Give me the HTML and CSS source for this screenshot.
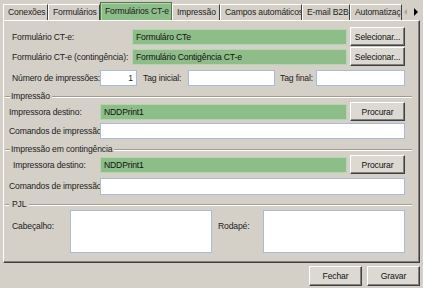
FILE: index.html
```html
<!DOCTYPE html>
<html>
<head>
<meta charset="utf-8">
<link rel="stylesheet" href="styles.css">
</head>
<body>
<div class="window">
  <div class="tabs">
    <div class="tab t1">Conexões</div>
    <div class="tab t2">Formulários</div>
    <div class="tab active t3">Formulários CT-e</div>
    <div class="tab t4">Impressão</div>
    <div class="tab t5">Campos automáticos</div>
    <div class="tab t6">E-mail B2B</div>
    <div class="tab t7">Automatizaç</div>
    <div class="arrows">
      <svg width="18" height="10" viewBox="0 0 18 10"><path d="M5 2 L2 5 L5 8 Z" fill="#a8a49c"/><path d="M12 1 L16 5 L12 9 Z" fill="#000"/></svg>
    </div>
  </div>
  <div class="panel">
    <div class="row r1">
      <span class="lbl w120">Formulário CT-e:</span>
      <div class="green w215">Formuláro CTe</div>
      <button class="btn sel">Selecionar...</button>
    </div>
    <div class="row r2">
      <span class="lbl w120">Formulário CT-e (contingência):</span>
      <div class="green w215">Formulário Contigência CT-e</div>
      <button class="btn sel">Selecionar...</button>
    </div>
    <div class="row r3">
      <span class="lbl w88">Número de impressões:</span>
      <div class="input num">1</div>
      <span class="lbl tagi">Tag inicial:</span>
      <div class="input w87"></div>
      <span class="lbl tagf">Tag final:</span>
      <div class="input w89"></div>
    </div>

    <div class="legend g1"><span>Impressão</span></div>
    <div class="row r4">
      <span class="lbl w91">Impressora destino:</span>
      <div class="green w247">NDDPrint1</div>
      <button class="btn proc">Procurar</button>
    </div>
    <div class="row r5">
      <span class="lbl w91">Comandos de impressão:</span>
      <div class="input w305"></div>
    </div>

    <div class="legend g2"><span>Impressão em contingência</span></div>
    <div class="row r6">
      <span class="lbl w91 ind">Impressora destino:</span>
      <div class="green w247">NDDPrint1</div>
      <button class="btn proc">Procurar</button>
    </div>
    <div class="row r7">
      <span class="lbl w91">Comandos de impressão:</span>
      <div class="input w305"></div>
    </div>

    <div class="legend g3"><span>PJL</span></div>
    <div class="row r8">
      <span class="lbl cab">Cabeçalho:</span>
      <div class="input area"></div>
      <span class="lbl rod">Rodapé:</span>
      <div class="input area"></div>
    </div>
  </div>
  <div class="footer">
    <button class="btn foot">Fechar</button>
    <button class="btn foot">Gravar</button>
  </div>
</div>
</body>
</html>
```

FILE: styles.css
```css
* { box-sizing: border-box; }
html, body {
  margin: 0;
  padding: 0;
  background: #d4d0c8;
  width: 423px;
  height: 288px;
  overflow: hidden;
  font-family: "Liberation Sans", Arial, sans-serif;
  font-size: 8.6px;
  letter-spacing: -0.15px;
  color: #222;
}
.window {
  padding: 2px 3px 0 3px;
}
.tabs {
  display: flex;
  align-items: flex-end;
  height: 18px;
  position: relative;
  z-index: 1;
}
.tab {
  height: 16px;
  line-height: 15px;
  padding: 0 3px 0 4px;
  border: 1px solid;
  border-color: #fff #404040 transparent #fff;
  border-bottom: none;
  white-space: nowrap;
  overflow: hidden;
}
.t1 { width: 45px; }
.t2 { width: 52px; }
.t3 { width: 72px; }
.t4 { width: 48px; }
.t5 { width: 82px; }
.t6 { width: 48px; }
.t7 { width: 52px; }
.tab.active {
  height: 18px;
  background: #8dbd88;
  border: 1px solid #4f7a4b;
  border-bottom: none;
  line-height: 16px;
  box-shadow: inset 1px 1px #b6d8b1;
}
.arrows {
  height: 16px;
  display: flex;
  align-items: center;
}
.panel {
  height: 243px;
  width: 417px;
  border: 1px solid;
  border-color: #fff #404040 #404040 #fff;
  box-shadow: inset -1px -1px #808080;
  padding: 6px 0 0 5px;
}
.row {
  display: flex;
  align-items: center;
}
.r1, .r2, .r3 { padding-left: 3px; }
.r1 { height: 19px; }
.r2 { height: 19px; margin-top: 1px; }
.r3 { height: 18px; margin-top: 3px; }
.r4 { height: 19px; }
.r5 { height: 17px; margin-top: 1px; }
.r6 { height: 19px; }
.r7 { height: 18px; margin-top: 3px; }
.r8 { align-items: flex-start; height: 43px; }

.lbl { white-space: nowrap; flex: none; }
.w120 { width: 120px; }
.w88 { width: 88px; }
.w91 { width: 91px; }
.ind { padding-left: 4px; }
.tagi { width: 45px; margin-left: 6px; }
.tagf { width: 36px; margin-left: 5px; }
.cab { width: 58px; margin-left: 3px; margin-top: 11px; }
.rod { width: 45px; margin-left: 6px; margin-top: 11px; }

.green {
  height: 16px;
  background: #8dbd88;
  border: 1px solid #b4d6ae;
  line-height: 14px;
  padding-left: 3px;
  flex: none;
  color: #111;
}
.w215 { width: 215px; }
.w247 { width: 247px; }

.input {
  height: 16px;
  background: #fff;
  border: 1px solid #a9bcd3;
  flex: none;
  line-height: 14px;
}
.num { width: 37px; text-align: right; padding-right: 3px; }
.w87 { width: 87px; }
.w89 { width: 89px; }
.w305 { width: 305px; }
.r7 .input { height: 17px; }
.area { width: 142px; height: 43px; }

.btn {
  font-family: inherit;
  font-size: 8.6px;
  letter-spacing: -0.15px;
  color: #111;
  background: #dcd9d2;
  border: 1px solid;
  border-color: #fff #404040 #404040 #fff;
  box-shadow: inset -1px -1px #808080;
  padding: 0;
  margin: 0;
  flex: none;
}
.sel, .proc { width: 55px; height: 19px; margin-left: 3px; }
.foot { width: 53px; height: 20px; }

.legend {
  height: 12px;
  position: relative;
  display: flex;
  align-items: center;
  margin-left: -4px;
  width: 407px;
}
.legend::before {
  content: "";
  position: absolute;
  left: 0;
  right: 0;
  top: 6px;
  border-top: 1px solid #a09c94;
  border-bottom: 1px solid #fff;
}
.legend span {
  position: relative;
  background: #d4d0c8;
  margin-left: 5px;
  padding: 0 2px 0 1px;
  line-height: 12px;
}
.g1 { margin-top: 3px; }
.g2 { margin-top: 4px; }
.g3 { margin-top: 3px; }
.g3 span { margin-left: 4px; padding: 0 3px; }

.footer {
  display: flex;
  justify-content: flex-end;
  gap: 5px;
  padding-top: 3px;
}
```
